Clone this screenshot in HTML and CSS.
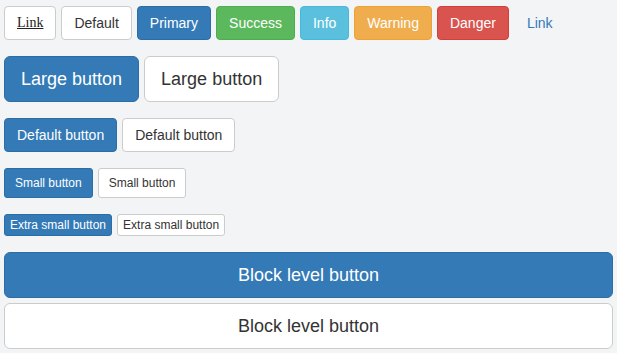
FILE: index.html
```html
<!DOCTYPE html>
<html lang="en">
<head>
  <meta charset="UTF-8">
  <title>Buttons</title>
  <link rel="stylesheet" href="styles.css">
</head>
<body>

  <div class="row">
    <button class="btn btn-default btn-plain">Link</button>
    <button class="btn btn-default">Default</button>
    <button class="btn btn-primary">Primary</button>
    <button class="btn btn-success">Success</button>
    <button class="btn btn-info">Info</button>
    <button class="btn btn-warning">Warning</button>
    <button class="btn btn-danger">Danger</button>
    <button class="btn btn-link">Link</button>
  </div>

  <div class="row">
    <button class="btn btn-primary btn-lg">Large button</button>
    <button class="btn btn-default btn-lg">Large button</button>
  </div>

  <div class="row">
    <button class="btn btn-primary">Default button</button>
    <button class="btn btn-default">Default button</button>
  </div>

  <div class="row">
    <button class="btn btn-primary btn-sm">Small button</button>
    <button class="btn btn-default btn-sm">Small button</button>
  </div>

  <div class="row">
    <button class="btn btn-primary btn-xs">Extra small button</button>
    <button class="btn btn-default btn-xs">Extra small button</button>
  </div>

  <div class="blocks">
    <button class="btn btn-primary btn-lg btn-block">Block level button</button>
    <button class="btn btn-default btn-lg btn-block">Block level button</button>
  </div>

</body>
</html>
```

FILE: styles.css
```css
body {
  margin: 0;
  padding: 6px 4px 0 4px;
  background: #f3f4f6;
  font-family: "Liberation Sans", Arial, sans-serif;
  color: #333;
}
.row {
  display: flex;
  gap: 5px;
  margin-bottom: 16px;
}
.blocks {
  display: flex;
  flex-direction: column;
  gap: 5px;
}
.btn {
  box-sizing: border-box;
  height: 34px;
  font-family: "Liberation Sans", Arial, sans-serif;
  font-size: 14px;
  line-height: 20px;
  padding: 6px 12px;
  border: 1px solid transparent;
  border-radius: 4px;
  cursor: pointer;
  white-space: nowrap;
}
.btn-default {
  background: #fff;
  border-color: #ccc;
  color: #333;
}
.btn-plain {
  font-family: "Liberation Serif", "Times New Roman", serif;
  text-decoration: underline;
  color: #222;
}
.btn-primary {
  background: #337ab7;
  border-color: #2e6da4;
  color: #fff;
}
.btn-success {
  background: #5cb85c;
  border-color: #4cae4c;
  color: #fff;
}
.btn-info {
  background: #5bc0de;
  border-color: #46b8da;
  color: #fff;
}
.btn-warning {
  background: #f0ad4e;
  border-color: #eea236;
  color: #fff;
}
.btn-danger {
  background: #d9534f;
  border-color: #d43f3a;
  color: #fff;
}
.btn-link {
  background: transparent;
  color: #337ab7;
}
.btn-lg {
  height: 46px;
  font-size: 18px;
  line-height: 24px;
  padding: 10px 16px;
  border-radius: 6px;
}
.btn-sm {
  height: 30px;
  font-size: 12px;
  line-height: 18px;
  padding: 5px 10px;
  border-radius: 3px;
}
.btn-xs {
  height: 22px;
  font-size: 12px;
  line-height: 18px;
  padding: 1px 5px;
  border-radius: 3px;
}
.btn-block {
  width: 100%;
}
```
